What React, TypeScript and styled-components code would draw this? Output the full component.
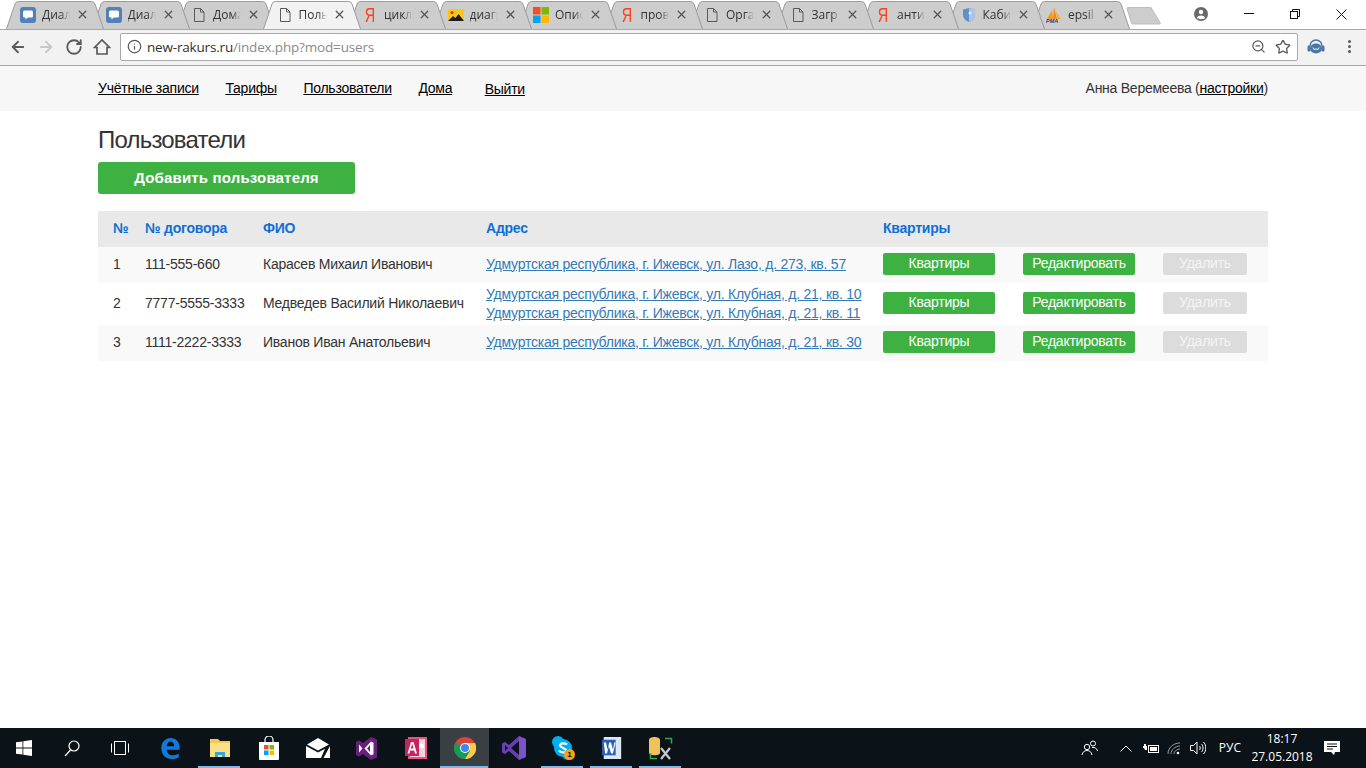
import React from "react";
import styled, { createGlobalStyle } from "styled-components";
import { ArrowLeft, ArrowRight, RotateCw, Info, ZoomOut, Star, X } from "lucide-react";

const GlobalStyle = createGlobalStyle`
  html, body {
    margin: 0;
    padding: 0;
    background: #fff;
    font-family: "Liberation Sans", Arial, sans-serif;
    overflow: hidden;
  }
`;

/* ---------- favicons ---------- */

const ChatIcon = () => (
  <svg width="16" height="16" viewBox="0 0 16 16">
    <rect width="16" height="16" rx="3" fill="#5181b8" />
    <path d="M4.5 3.5h7a1.5 1.5 0 0 1 1.5 1.5v4a1.5 1.5 0 0 1-1.5 1.5H8L5.5 12.5v-2h-1A1.5 1.5 0 0 1 3 9V5a1.5 1.5 0 0 1 1.5-1.5z" fill="#fff" />
  </svg>
);

const DocIcon = () => (
  <svg width="16" height="16" viewBox="0 0 16 16" fill="none" stroke="#5a5a5a" strokeWidth="1">
    <path d="M3.5 1.5h6l3.5 3.5v9.5h-9.5z" />
    <path d="M9.5 1.5v3.5h3.5" />
  </svg>
);

const YandexIcon = styled.span`
  display: block;
  width: 16px;
  text-align: center;
  font: 400 20px/24px "Liberation Sans", sans-serif;
  color: #fc3f1d;
  transform: scaleX(0.72);
`;

const PictureIcon = () => (
  <svg width="16" height="16" viewBox="0 0 16 16">
    <rect y="2" width="16" height="12" fill="#fdc80f" />
    <circle cx="4" cy="5.5" r="1.6" fill="#e5301c" />
    <path d="M0 14l5-5 2.5 2 3-4 5.5 7z" fill="#1b1b1b" />
  </svg>
);

const MicrosoftIcon = () => (
  <svg width="16" height="16" viewBox="0 0 16 16">
    <rect width="7.5" height="7.5" fill="#f25022" />
    <rect x="8.5" width="7.5" height="7.5" fill="#7fba00" />
    <rect y="8.5" width="7.5" height="7.5" fill="#00a4ef" />
    <rect x="8.5" y="8.5" width="7.5" height="7.5" fill="#ffb900" />
  </svg>
);

const ShieldIcon = () => (
  <svg width="16" height="16" viewBox="0 0 16 16">
    <path d="M2 2.5l6-1.5 6 1.5v5c0 4-3 6.500-6 7.500-3-1-6-3.500-6-7.500z" fill="#5f8fc9" />
    <path d="M8 1l6 1.500v5c0 4-3 6.500-6 7.500z" fill="#a9c6e6" />
    <circle cx="9" cy="6" r="1.500" fill="#e8f1fa" />
  </svg>
);

const PmaMark = styled.span`
  position: relative;
  width: 16px;
  height: 17px;
  font: italic 700 5.5px/5px "Liberation Sans", sans-serif;
  color: #25408f;
  display: flex;
  align-items: flex-end;
`;

const PmaSails = styled.svg`
  position: absolute;
  top: 0;
  left: 0;
`;

const PmaIcon = () => (
  <PmaMark>
    <PmaSails width="16" height="12" viewBox="0 0 16 12">
      <path d="M1 12L6 3l1 9z" fill="#f29c1f" />
      <path d="M7 12l1-12 3 12z" fill="#f08a1d" />
      <path d="M11 12l-1-8 5 8z" fill="#f2b134" />
    </PmaSails>
    PMA
  </PmaMark>
);

/* ---------- tab strip ---------- */

const Strip = styled.div`
  display: flex;
  align-items: flex-start;
  height: 29px;
  padding-left: 6px;
  background: #fff;
  position: relative;
`;

const Tab = styled.div<{ $active?: boolean; $order: number }>`
  position: relative;
  flex: none;
  width: 98px;
  height: 28px;
  margin-top: 1px;
  margin-right: -12.5px;
  padding-left: 14px;
  box-sizing: border-box;
  display: flex;
  align-items: center;
  z-index: ${(p) => (p.$active ? 40 : 30 - p.$order)};
  color: #333;
`;

const TabShape = styled.svg`
  position: absolute;
  left: 0;
  top: 0;
`;

const FavSlot = styled.div`
  position: relative;
  width: 16px;
  height: 16px;
  display: flex;
  align-items: center;
  justify-content: center;
`;

const TabTitle = styled.span`
  position: relative;
  width: 28px;
  margin-left: 6px;
  white-space: nowrap;
  font: 12px/16px "Open Sans", sans-serif;
  -webkit-mask-image: linear-gradient(to right, #000 68%, transparent);
  mask-image: linear-gradient(to right, #000 68%, transparent);
`;

const TabClose = styled(X)`
  position: absolute;
  left: 70px;
  top: 7px;
  color: #555;
`;

const NewTab = styled.svg`
  flex: none;
  margin: 7px 0 0 8px;
`;

const WindowButtons = styled.div`
  position: absolute;
  right: 2px;
  top: 0;
  height: 28px;
  display: flex;
  align-items: center;
`;

const WindowButton = styled.div`
  width: 46px;
  height: 28px;
  display: flex;
  align-items: center;
  justify-content: center;
`;

const Profile = styled.svg`
  margin-right: 18px;
`;

/* ---------- toolbar ---------- */

const Toolbar = styled.div`
  height: 37px;
  box-sizing: border-box;
  background: #f2f2f2;
  border-top: 1px solid #a9a9a9;
  border-bottom: 1px solid #a9a9a9;
  display: flex;
  align-items: center;
  padding: 0 9px 2px 9px;
`;

const NavIcons = styled.div`
  display: flex;
  align-items: center;
  gap: 10px;
  width: 111px;
  flex: none;
  color: #5a5a5a;
`;

const UrlBox = styled.div`
  flex: 1;
  height: 28px;
  box-sizing: border-box;
  background: #fff;
  border: 1px solid #a9a9a9;
  border-radius: 2px;
  display: flex;
  align-items: center;
  padding: 0 6px;
  color: #5a5a5a;
`;

const UrlText = styled.div`
  flex: 1;
  margin-left: 5px;
  font: 13.5px/20px "Open Sans", sans-serif;
  letter-spacing: -0.18px;
  color: #8a8a8a;
  b {
    font-weight: 400;
    color: #303030;
  }
`;

const UrlTools = styled.div`
  display: flex;
  align-items: center;
  gap: 9px;
`;

const Extensions = styled.div`
  flex: none;
  width: 59px;
  display: flex;
  align-items: center;
  justify-content: space-between;
  padding-left: 9px;
  box-sizing: border-box;
`;

const MenuDots = styled.div`
  width: 3px;
  height: 3px;
  margin-right: 6px;
  border-radius: 50%;
  background: #5a5a5a;
  box-shadow: 0 -5px 0 #5a5a5a, 0 5px 0 #5a5a5a;
`;

/* ---------- page ---------- */

const TopBar = styled.div`
  height: 45px;
  box-sizing: border-box;
  background: #f7f7f7;
  padding: 0 98px 2px;
  display: flex;
  align-items: center;
  font-size: 14px;
  letter-spacing: -0.25px;
  color: #333;
`;

const TopLink = styled.a<{ $shift?: boolean }>`
  color: #000;
  text-decoration: underline;
  margin-right: ${(p) => (p.$shift ? "32.5px" : "26.6px")};
`;

const LogoutLink = styled(TopLink)`
  margin-top: 2px;
`;

const SettingsLink = styled.a`
  color: #000;
  text-decoration: underline;
`;

const UserBox = styled.div`
  margin-left: auto;
`;

const Content = styled.div`
  flex: 1;
  padding: 0 98px;
  background: #fff;
`;

const Heading = styled.h1`
  margin: 15px 0 9px;
  font-size: 24px;
  line-height: 27px;
  font-weight: 400;
  letter-spacing: -0.8px;
  color: #333;
`;

const AddButton = styled.div`
  width: 257px;
  height: 32px;
  box-sizing: border-box;
  padding-bottom: 2px;
  border-radius: 3px;
  background: #3eb143;
  color: #fff;
  font-size: 15px;
  font-weight: 700;
  letter-spacing: 0.17px;
  display: flex;
  align-items: center;
  justify-content: center;
`;

const Table = styled.table`
  width: 1170px;
  margin-top: 17px;
  border-collapse: collapse;
  table-layout: fixed;
  font-size: 14px;
  letter-spacing: -0.235px;
  color: #333;
`;

const HeadRow = styled.tr`
  height: 36px;
  background: #e9e9e9;
`;

const Th = styled.th<{ $w?: number }>`
  ${(p) => (p.$w ? `width: ${p.$w}px;` : "")}
  padding: 0 0 2px 15px;
  box-sizing: border-box;
  text-align: left;
  font-weight: 700;
  color: #0f6fd9;
`;

const Row = styled.tr`
  &:nth-child(odd) {
    background: #f9f9f9;
  }
`;

const Td = styled.td`
  padding: 2px 0 2px 15px;
  line-height: 19px;
  vertical-align: middle;
  white-space: nowrap;
`;

const TextTd = styled(Td)`
  padding-bottom: 4px;
`;

const AddressLink = styled.a`
  display: block;
  color: #337ab7;
  text-decoration: underline;
  &:only-child {
    margin-bottom: 2px;
  }
`;

const SmallButton = styled.div<{ $off?: boolean }>`
  width: ${(p) => (p.$off ? 84 : 112)}px;
  height: 22px;
  box-sizing: border-box;
  padding-bottom: 2px;
  margin: 4px 0 6px;
  border-radius: 2px;
  background: ${(p) => (p.$off ? "#dcdcdc" : "#3eb143")};
  color: ${(p) => (p.$off ? "#f4f4f4" : "#fff")};
  display: flex;
  align-items: center;
  justify-content: center;
`;

/* ---------- taskbar ---------- */

const Taskbar = styled.div`
  height: 40px;
  background: #0c1318;
  display: flex;
  align-items: stretch;
  color: #fff;
`;

const ShellButton = styled.div`
  flex: none;
  width: 48px;
  display: flex;
  align-items: center;
  justify-content: center;
`;

const Apps = styled.div`
  display: flex;
  margin-left: 2px;
`;

const AppButton = styled.div<{ $open?: boolean; $active?: boolean }>`
  position: relative;
  flex: none;
  width: 49px;
  display: flex;
  align-items: center;
  justify-content: center;
  background: ${(p) => (p.$active ? "#3a3f43" : "transparent")};
  &::after {
    content: "";
    display: ${(p) => (p.$open ? "block" : "none")};
    position: absolute;
    left: ${(p) => (p.$active ? 0 : "3px")};
    right: ${(p) => (p.$active ? "1px" : "4px")};
    bottom: 0;
    height: 2px;
    background: #76b9ed;
  }
`;

const SkypeBadge = styled.span`
  position: absolute;
  left: 26px;
  top: 21px;
  width: 11px;
  height: 11px;
  border-radius: 50%;
  background: #f7a11a;
  color: #111;
  font: 700 8px/11px "Liberation Sans", sans-serif;
  text-align: center;
`;

const Tray = styled.div`
  margin-left: auto;
  display: flex;
  align-items: center;
  gap: 6px;
  padding-right: 23px;
`;

const TrayIcon = styled.div<{ $w: number; $after?: number }>`
  width: ${(p) => p.$w}px;
  margin-right: ${(p) => p.$after ?? 0}px;
  display: flex;
  justify-content: center;
`;

const Lang = styled.div`
  font: 12px/16px "Open Sans", sans-serif;
  margin: 0 3px 0 6px;
`;

const Clock = styled.div`
  width: 64px;
  margin-right: 1px;
  text-align: center;
  font: 12px/18px "Open Sans", sans-serif;
`;

const Page = styled.div`
  width: 1366px;
  height: 768px;
  display: flex;
  flex-direction: column;
`;

/* ---------- data ---------- */

const tabs = [
  { title: "Диал", icon: <ChatIcon /> },
  { title: "Диал", icon: <ChatIcon /> },
  { title: "Дома", icon: <DocIcon /> },
  { title: "Поль", icon: <DocIcon />, active: true },
  { title: "цикл", icon: <YandexIcon>Я</YandexIcon> },
  { title: "диагр", icon: <PictureIcon /> },
  { title: "Опис", icon: <MicrosoftIcon /> },
  { title: "пров", icon: <YandexIcon>Я</YandexIcon> },
  { title: "Орга", icon: <DocIcon /> },
  { title: "Загр", icon: <DocIcon /> },
  { title: "анти", icon: <YandexIcon>Я</YandexIcon> },
  { title: "Каби", icon: <ShieldIcon /> },
  { title: "epsil", icon: <PmaIcon /> },
];

const users = [
  {
    id: 1,
    contract: "111-555-660",
    name: "Карасев Михаил Иванович",
    addresses: ["Удмуртская республика, г. Ижевск, ул. Лазо, д. 273, кв. 57"],
  },
  {
    id: 2,
    contract: "7777-5555-3333",
    name: "Медведев Василий Николаевич",
    addresses: [
      "Удмуртская республика, г. Ижевск, ул. Клубная, д. 21, кв. 10",
      "Удмуртская республика, г. Ижевск, ул. Клубная, д. 21, кв. 11",
    ],
  },
  {
    id: 3,
    contract: "1111-2222-3333",
    name: "Иванов Иван Анатольевич",
    addresses: ["Удмуртская республика, г. Ижевск, ул. Клубная, д. 21, кв. 30"],
  },
];

const apps = [
  {
    key: "edge",
    icon: (
      <svg width="21" height="22" viewBox="0 0 22 24">
        <path d="M1 12C1 5 6 1 11 1c6 0 10 4 10 11v2H7c0 4 3 6 6 6 3 0 5-1 7-2v4c-2 1-4 2-8 2-6 0-11-4-11-12zm6-2h8c0-3-2-5-4-5s-4 2-4 5z" fill="#0f7ad8" />
      </svg>
    ),
  },
  {
    key: "explorer",
    open: true,
    icon: (
      <svg width="22" height="22" viewBox="0 0 22 22">
        <path d="M1 2h8l2 2h10v16H1z" fill="#f3c94f" />
        <rect x="1" y="6" width="20" height="14" fill="#fbe08a" />
        <path d="M6 20v-5h10v5h-3v-2H9v2z" fill="#3aa5dc" />
      </svg>
    ),
  },
  {
    key: "store",
    icon: (
      <svg width="22" height="24" viewBox="0 0 22 24">
        <path d="M7 7V4a4 4 0 0 1 8 0v3" fill="none" stroke="#fff" strokeWidth="1.200" />
        <path d="M1 6h20v17a1 1 0 0 1-1 1H2a1 1 0 0 1-1-1z" fill="#fff" />
        <rect x="6" y="9" width="4.500" height="4.500" fill="#f25022" />
        <rect x="11.500" y="9" width="4.500" height="4.500" fill="#7fba00" />
        <rect x="6" y="14.500" width="4.500" height="4.500" fill="#00a4ef" />
        <rect x="11.500" y="14.500" width="4.500" height="4.500" fill="#ffb900" />
      </svg>
    ),
  },
  {
    key: "mail",
    icon: (
      <svg width="24" height="20" viewBox="0 0 24 20">
        <path d="M1 6.500L12 0l11 6.500L12 12.500z" fill="#fff" />
        <path d="M0 8l12 6.500 7-3.800L15 20H0zM24 8v12h-6.500z" fill="#fff" />
      </svg>
    ),
  },
  {
    key: "vs-old",
    icon: (
      <svg width="21" height="23" viewBox="0 0 21 23">
        <path d="M15 0l6 2.500v18L15 23l-8-6-4 2.500L0 18V5l3-1.500 4 2.500z" fill="#68217a" />
        <path d="M15 4.500L8.500 11.500 15 18.500l2.500-1.200V5.700zM3 7.500v8l3.500-4z" fill="#fff" />
        <path d="M14 8l-3 3.500 3 3.500z" fill="#68217a" />
      </svg>
    ),
  },
  {
    key: "access",
    icon: (
      <svg width="22" height="22" viewBox="0 0 22 22">
        <rect x="3" width="19" height="22" fill="#e9557f" />
        <rect x="5" y="2" width="15" height="18" fill="#f9d4de" />
        <rect y="2" width="14" height="17" fill="#c4245f" />
        <path d="M2.500 16.500L6 5h2.500L12 16.500H10l-.8-3H5.200l-.8 3zm3.200-5H8.700L7.200 7z" fill="#fff" />
        <circle cx="16.500" cy="9" r="2.500" fill="#fff" />
      </svg>
    ),
  },
  {
    key: "chrome",
    open: true,
    active: true,
    icon: (
      <svg width="22" height="22" viewBox="0 0 22 22">
        <circle cx="11" cy="11" r="11" fill="#db4437" />
        <path d="M11 11L1.500 5.500A11 11 0 0 0 11 22l5-8z" fill="#0f9d58" />
        <path d="M11 6h10a11 11 0 0 1-10 16l5-8z" fill="#ffcd40" />
        <circle cx="11" cy="11" r="5" fill="#fff" />
        <circle cx="11" cy="11" r="4" fill="#4285f4" />
      </svg>
    ),
  },
  {
    key: "vs",
    icon: (
      <svg width="24" height="24" viewBox="0 0 24 24">
        <path d="M17 0l7 3v18l-7 3V0z" fill="#7b55c7" />
        <path d="M17 0v5L9 12l8 7v5L7 15l-4 3-3-1.500v-9L3 6l4 3z" fill="#6a3fb5" />
        <path d="M3 9v6l3-3z" fill="#0c1318" />
      </svg>
    ),
  },
  {
    key: "skype",
    open: true,
    badge: "1",
    icon: (
      <svg width="22" height="24" viewBox="0 0 22 24">
        <circle cx="6" cy="6" r="6" fill="#00aff0" />
        <circle cx="16" cy="18" r="6" fill="#00aff0" />
        <circle cx="11" cy="12" r="9" fill="#00aff0" />
        <path d="M15 8.500c-1-1-6-2-7 .5s6 3 6.500 5.500-6 2.500-7.500 0" fill="none" stroke="#fff" strokeWidth="2.200" />
      </svg>
    ),
  },
  {
    key: "word",
    open: true,
    icon: (
      <svg width="22" height="22" viewBox="0 0 24 24">
        <rect x="3" width="19" height="24" fill="#dbe7f6" />
        <path d="M1 3h15v17H1z" fill="#2b5fb3" />
        <path d="M3 6h2.500l1.500 8 2-8h2l2 8 1.500-8H16l-3 12h-2L8.500 10 6.500 18h-2z" fill="#fff" />
      </svg>
    ),
  },
  {
    key: "tool",
    open: true,
    icon: (
      <svg width="24" height="23" viewBox="0 0 24 23">
        <path d="M0 3c0-4 11-4 11 0v13c0 3-11 3-11 0z" fill="#eec35a" />
        <path d="M16 1.500h6.500v5M1.500 16v5.500H8" fill="none" stroke="#2fa84f" strokeWidth="1.500" />
        <path d="M12 11l9 11M21 11l-9 11" stroke="#c8c8c8" strokeWidth="2.200" />
      </svg>
    ),
  },
];

const App = () => {
  return (
    <Page>
      <GlobalStyle />
      <Strip>
        {tabs.map((t, i) => (
          <Tab key={i} $order={i} $active={t.active}>
            <TabShape width="98" height="28" viewBox="0 0 98 28">
              <path
                d="M0.500 28L9 3Q10 0.500 12.500 0.500H85.500Q88 0.500 89 3L97.500 28"
                fill={t.active ? "#f2f2f2" : "#cdcdcd"}
                stroke="#9b9b9b"
              />
            </TabShape>
            <FavSlot>{t.icon}</FavSlot>
            <TabTitle>{t.title}</TabTitle>
            <TabClose size={13} strokeWidth={2.400} />
          </Tab>
        ))}
        <NewTab width="36" height="18" viewBox="0 0 36 18">
          <path d="M1 1.500Q1 0.500 2 0.500H25L34 15.500Q35 17 33 17H7Q6 17 5.500 16z" fill="#cdcdcd" stroke="#bdbdbd" />
        </NewTab>
        <WindowButtons>
          <Profile width="14" height="14" viewBox="0 0 14 14">
            <circle cx="7" cy="7" r="7" fill="#6a6a6a" />
            <circle cx="7" cy="5" r="2.200" fill="#fff" />
            <path d="M2.800 11c.8-2 2.500-2.600 4.200-2.600s3.400.6 4.200 2.600c-2 1.600-6.400 1.600-8.400 0z" fill="#fff" />
          </Profile>
          <WindowButton>
            <svg width="10" height="2" viewBox="0 0 10 2">
              <rect width="10" height="1" fill="#111" />
            </svg>
          </WindowButton>
          <WindowButton>
            <svg width="10" height="10" viewBox="0 0 10 10" fill="none" stroke="#111">
              <rect x="0.500" y="2.500" width="7" height="7" />
              <path d="M2.500 2.500v-2h7v7h-2" />
            </svg>
          </WindowButton>
          <WindowButton>
            <svg width="11" height="11" viewBox="0 0 11 11" stroke="#111">
              <path d="M0.500 0.500l10 10M10.500 0.500l-10 10" />
            </svg>
          </WindowButton>
        </WindowButtons>
      </Strip>

      <Toolbar>
        <NavIcons>
          <ArrowLeft size={18} strokeWidth={2.400} />
          <ArrowRight size={18} strokeWidth={2.400} color="#c8c8c8" />
          <RotateCw size={18} strokeWidth={2.400} />
          <svg width="18" height="18" viewBox="0 0 18 18" fill="none" stroke="#5a5a5a" strokeWidth="1.700">
            <path d="M1.500 9.500L9 2l7.500 7.500H14V16H4V9.500z" />
          </svg>
        </NavIcons>
        <UrlBox>
          <Info size={15} strokeWidth={2} />
          <UrlText>
            <b>new-rakurs.ru</b>/index.php?mod=users
          </UrlText>
          <UrlTools>
            <ZoomOut size={15} strokeWidth={2} />
            <Star size={16} strokeWidth={2} />
          </UrlTools>
        </UrlBox>
        <Extensions>
          <svg width="18" height="15" viewBox="0 0 18 15">
            <path d="M3 7a6 6 0 0 1 12 0" fill="none" stroke="#4a76a8" strokeWidth="1.500" />
            <ellipse cx="9" cy="9.500" rx="6" ry="5" fill="#4a76a8" />
            <rect x="0.500" y="6.500" width="3" height="6" rx="1.200" fill="#4a76a8" />
            <rect x="14.500" y="6.500" width="3" height="6" rx="1.200" fill="#4a76a8" />
            <path d="M6 8.500l1.500 2.500L9 9.500 10.500 11 12 8.500" fill="none" stroke="#fff" />
          </svg>
          <MenuDots />
        </Extensions>
      </Toolbar>

      <TopBar>
        <TopLink>Учётные записи</TopLink>
        <TopLink>Тарифы</TopLink>
        <TopLink>Пользователи</TopLink>
        <TopLink $shift>Дома</TopLink>
        <LogoutLink>Выйти</LogoutLink>
        <UserBox>
          Анна Веремеева (<SettingsLink>настройки</SettingsLink>)
        </UserBox>
      </TopBar>

      <Content>
        <Heading>Пользователи</Heading>
        <AddButton>Добавить пользователя</AddButton>
        <Table>
          <thead>
            <HeadRow>
              <Th $w={32}>№</Th>
              <Th $w={118}>№ договора</Th>
              <Th $w={223}>ФИО</Th>
              <Th $w={397}>Адрес</Th>
              <Th $w={140}>Квартиры</Th>
              <Th $w={140} />
              <Th />
            </HeadRow>
          </thead>
          <tbody>
            {users.map((u) => (
              <Row key={u.id}>
                <TextTd>{u.id}</TextTd>
                <TextTd>{u.contract}</TextTd>
                <TextTd>{u.name}</TextTd>
                <Td>
                  {u.addresses.map((a) => (
                    <AddressLink key={a}>{a}</AddressLink>
                  ))}
                </Td>
                <Td>
                  <SmallButton>Квартиры</SmallButton>
                </Td>
                <Td>
                  <SmallButton>Редактировать</SmallButton>
                </Td>
                <Td>
                  <SmallButton $off>Удалить</SmallButton>
                </Td>
              </Row>
            ))}
          </tbody>
        </Table>
      </Content>

      <Taskbar>
        <ShellButton>
          <svg width="16" height="16" viewBox="0 0 16 16" fill="#fff">
            <path d="M0 2.300l6.500-.9v6.200H0zM7.300 1.300L16 0v7.600H7.300zM0 8.400h6.500v6.200L0 13.700zM7.300 8.400H16V16l-8.700-1.300z" />
          </svg>
        </ShellButton>
        <ShellButton>
          <svg width="16" height="17" viewBox="0 0 16 17" fill="none" stroke="#fff" strokeWidth="1.200">
            <circle cx="10" cy="6" r="5" />
            <path d="M6.500 10L1 16" />
          </svg>
        </ShellButton>
        <ShellButton>
          <svg width="20" height="14" viewBox="0 0 20 14" fill="none" stroke="#fff">
            <rect x="4.500" y="0.500" width="11" height="13" />
            <path d="M1.500 2.500v9M18.500 2.500v9" />
          </svg>
        </ShellButton>
        <Apps>
          {apps.map((a) => (
            <AppButton key={a.key} $open={a.open} $active={a.active}>
              {a.icon}
              {a.badge && <SkypeBadge>{a.badge}</SkypeBadge>}
            </AppButton>
          ))}
        </Apps>
        <Tray>
          <TrayIcon $w={20} $after={9}>
            <svg width="18" height="16" viewBox="0 0 18 16" fill="none" stroke="#fff">
              <circle cx="6" cy="7" r="2.700" />
              <path d="M1 15c.5-3 2.500-4.500 5-4.500S10.500 12 11 15" />
              <circle cx="12" cy="3.500" r="2.500" />
              <path d="M11 7.500c2.500-.5 5 1 5.500 3.500" />
            </svg>
          </TrayIcon>
          <TrayIcon $w={22}>
            <svg width="12" height="7" viewBox="0 0 12 7" fill="none" stroke="#fff">
              <path d="M0.500 6.500L6 1l5.500 5.500" />
            </svg>
          </TrayIcon>
          <TrayIcon $w={16}>
            <svg width="16" height="11" viewBox="0 0 16 11">
              <path d="M1 1v2H0v2h1l1 2h2V3H3V1z" fill="#fff" />
              <rect x="5.500" y="2.500" width="10" height="7" fill="none" stroke="#fff" />
              <rect x="7" y="4" width="7" height="4" fill="#fff" />
            </svg>
          </TrayIcon>
          <TrayIcon $w={18}>
            <svg width="14" height="13" viewBox="0 0 14 13" fill="none" stroke="#9a9a9a">
              <path d="M1 12C1 6 6 1 13 1M4 12c0-4 4-8 9-8M7 12c0-2.500 3-5 6-5" />
              <circle cx="11" cy="11" r="1.300" fill="#fff" stroke="none" />
            </svg>
          </TrayIcon>
          <TrayIcon $w={18}>
            <svg width="16" height="14" viewBox="0 0 16 14" fill="none" stroke="#fff">
              <path d="M0.500 4.500h3l3.500-3.500v12l-3.500-3.500h-3z" />
              <path d="M9.500 5c1 1 1 3 0 4M11.500 3c2 2 2 6 0 8M13.500 1c3 3 3 9 0 12" />
            </svg>
          </TrayIcon>
          <Lang>РУС</Lang>
          <Clock>
            18:17
            <br />
            27.05.2018
          </Clock>
          <TrayIcon $w={22}>
            <svg width="16" height="15" viewBox="0 0 16 15">
              <path d="M0 0h16v11h-5l-1 3-3-3H0z" fill="#fff" />
              <path d="M3 3h10M3 5.500h10M3 8h6" stroke="#0c1318" />
            </svg>
          </TrayIcon>
        </Tray>
      </Taskbar>
    </Page>
  );
};

export default App;
